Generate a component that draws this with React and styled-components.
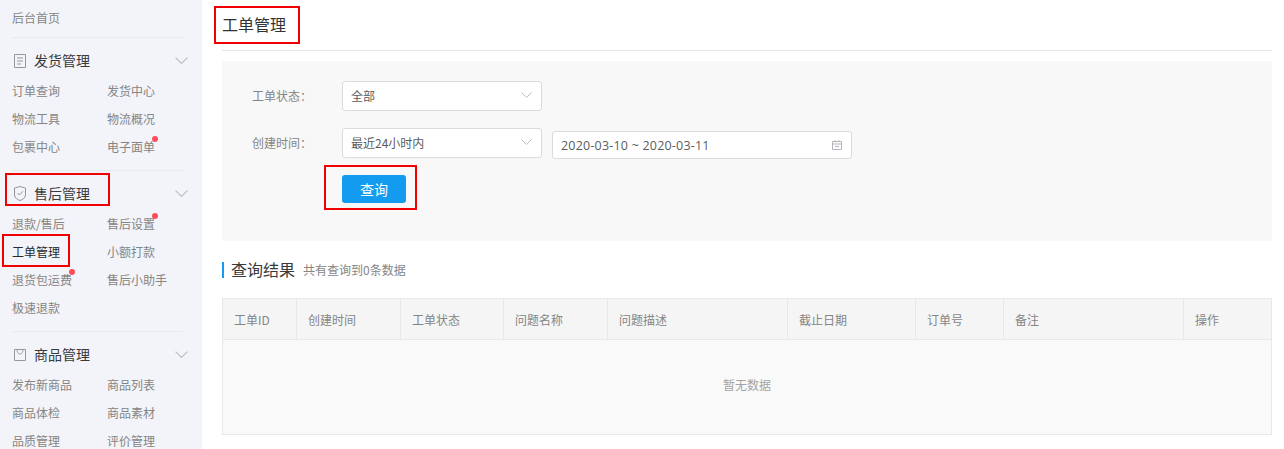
import React from 'react'
import styled, { createGlobalStyle } from 'styled-components'

const GlobalStyle = createGlobalStyle`
  html, body {
    margin: 0;
    padding: 0;
    background: #fff;
  }
  body {
    font-family: "Noto Sans CJK SC", "Open Sans", sans-serif;
    font-size: 12px;
    color: #666;
  }
  * { box-sizing: border-box; }
`

const Page = styled.div`
  position: relative;
  display: flex;
  width: 1284px;
  height: 449px;
  overflow: hidden;
`

const Sidebar = styled.aside`
  flex: none;
  width: 202px;
  height: 449px;
  padding: 0 19px 0 12px;
  background: #f3f4f9;
  overflow: hidden;
`

const HomeLink = styled.div`
  height: 38px;
  line-height: 36px;
  color: #858585;
  border-bottom: 1px solid #e9eaef;
`

const Section = styled.section`
  padding: 9px 0;
  border-bottom: 1px solid #e9eaef;
  &:last-child { border-bottom: 0; }
`

const SectionHead = styled.div`
  display: flex;
  align-items: center;
  height: 28px;
  margin-right: -5px;
  padding: 0 0 1px 2px;
  margin-bottom: 2px;
  font-size: 14px;
  color: #3a3a3a;
`

const SectionTitle = styled.span`
  flex: 1;
  margin: -1px 0 0 8px;
`

const LinkGrid = styled.div`
  display: grid;
  grid-template-columns: 95px 1fr;
  grid-auto-rows: 28px;
`

const NavLink = styled.a`
  position: relative;
  justify-self: start;
  line-height: 28px;
  color: ${p => (p.$active ? '#2a2a2a' : '#858585')};
`

const Dot = styled.i`
  position: absolute;
  top: 3px;
  right: -3px;
  width: 6px;
  height: 6px;
  border-radius: 50%;
  background: #ff4d5a;
`

const Main = styled.main`
  flex: 1;
  min-width: 0;
  margin-left: 20px;
  padding-right: 12px;
`

const Header = styled.header`
  height: 51px;
  line-height: 48px;
  font-size: 16px;
  color: #333;
  border-bottom: 1px solid #e6e6e6;
`

const FilterPanel = styled.div`
  height: 180px;
  margin-top: 10px;
  padding: 20px 30px;
  background: #f8f8f8;
`

const FormRow = styled.div`
  display: flex;
  align-items: flex-start;
  margin-bottom: 17px;
`

const Label = styled.label`
  flex: none;
  width: 90px;
  line-height: 30px;
  color: #858585;
`

const Select = styled.div`
  display: flex;
  align-items: center;
  justify-content: space-between;
  width: 200px;
  height: 30px;
  padding: 0 9px 2px 8px;
  color: #5c5c5c;
  background: #fff;
  border: 1px solid #dcdcdc;
  border-radius: 3px;
`

const DateInput = styled.div`
  display: flex;
  align-items: center;
  justify-content: space-between;
  width: 300px;
  height: 28px;
  margin: 3px 0 0 10px;
  padding: 0 9px 0 8px;
  font-family: "Open Sans", sans-serif;
  font-size: 12.5px;
  letter-spacing: 0.2px;
  color: #5c5c5c;
  background: #fff;
  border: 1px solid #dcdcdc;
  border-radius: 3px;
`

const QueryButton = styled.button`
  display: block;
  width: 64px;
  height: 28px;
  margin: -1px 0 0 90px;
  padding: 0;
  font: inherit;
  font-size: 14px;
  line-height: 26px;
  color: #fff;
  background: #129bef;
  border: 0;
  border-radius: 3px;
`

const ResultHead = styled.div`
  display: flex;
  align-items: center;
  height: 16px;
  margin-top: 21px;
  padding: 0 0 2px 7px;
  border-left: 2px solid #129bef;
`

const ResultTitle = styled.span`
  margin-right: 8px;
  font-size: 16px;
  color: #3a3a3a;
`

const ResultCount = styled.span`
  margin-top: 1px;
  color: #858585;
`

const Table = styled.div`
  margin-top: 20px;
  border: 1px solid #e8e8e8;
  background: #f9f9f9;
`

const TableHead = styled.div`
  display: grid;
  grid-template-columns: 73px 104px 103px 104px 180px 128px 88px 180px 1fr;
  height: 41px;
  background: #f5f5f5;
  border-bottom: 1px solid #e8e8e8;
`

const HeadCell = styled.div`
  padding-left: 11px;
  line-height: 41px;
  color: #858585;
  border-left: 1px solid #e8e8e8;
  &:first-child { border-left: 0; }
`

const Empty = styled.div`
  height: 94px;
  line-height: 90px;
  text-align: center;
  color: #a3a3a3;
`

const Mark = styled.div`
  position: absolute;
  left: ${p => p.$x}px;
  top: ${p => p.$y}px;
  width: ${p => p.$w}px;
  height: ${p => p.$h}px;
  border: 2px solid #f00000;
  pointer-events: none;
`

const Glyph = styled.svg`
  flex: none;
  display: block;
  fill: none;
  stroke: ${p => p.$stroke || '#969696'};
`

const Chevron = ({ width = 11, height = 6, stroke = '#bdbdbd' }) => (
  <Glyph $stroke={stroke} width={width} height={height} viewBox="0 0 11 6" preserveAspectRatio="none">
    <path d="M.5.5 5.500 5.500 10.500.5" />
  </Glyph>
)

const DocIcon = () => (
  <Glyph width="12" height="14" viewBox="0 0 12 14">
    <path d="M.5.5h11v13H.5zM3 4h6M3 7h6M3 10h4" />
  </Glyph>
)

const ShieldIcon = () => (
  <Glyph width="12" height="15" viewBox="0 0 12 15">
    <path d="M.5 2 6 .5 11.500 2v7C11.500 11.800 8.500 13.600 6 14.500 3.500 13.600.5 11.800.5 9z" />
    <path d="M3.500 7 5.500 9 8.800 5.300" />
  </Glyph>
)

const BagIcon = () => (
  <Glyph width="12" height="12" viewBox="0 0 12 12">
    <path d="M.5.5h11v11H.5zM3 .5C3.200 4 4.500 5 6 5s2.800-1 3-4.500" />
  </Glyph>
)

const CalendarIcon = () => (
  <Glyph $stroke="#b5b5bd" width="10" height="10" viewBox="0 0 10 10">
    <path d="M.5 1.500h9v8h-9zM.5 4h9M3 .2v2M7 .2v2M3 6.500h4" />
  </Glyph>
)

const menu = [
  {
    title: '发货管理',
    icon: <DocIcon />,
    links: [['订单查询'], ['发货中心'], ['物流工具'], ['物流概况'], ['包裹中心'], ['电子面单', 'dot']],
  },
  {
    title: '售后管理',
    icon: <ShieldIcon />,
    links: [['退款/售后'], ['售后设置', 'dot'], ['工单管理', 'active'], ['小额打款'], ['退货包运费', 'dot'], ['售后小助手'], ['极速退款']],
  },
  {
    title: '商品管理',
    icon: <BagIcon />,
    links: [['发布新商品'], ['商品列表'], ['商品体检'], ['商品素材'], ['品质管理'], ['评价管理']],
  },
]

const columns = ['工单ID', '创建时间', '工单状态', '问题名称', '问题描述', '截止日期', '订单号', '备注', '操作']

const App = () => {
  return (
    <Page>
      <GlobalStyle />
      <Sidebar>
        <HomeLink>后台首页</HomeLink>
        {menu.map(group => (
          <Section key={group.title}>
            <SectionHead>
              {group.icon}
              <SectionTitle>{group.title}</SectionTitle>
              <Chevron width={13} height={7} />
            </SectionHead>
            <LinkGrid>
              {group.links.map(([name, flag]) => (
                <NavLink key={name} $active={flag === 'active'}>
                  {name}
                  {flag === 'dot' && <Dot />}
                </NavLink>
              ))}
            </LinkGrid>
          </Section>
        ))}
      </Sidebar>

      <Main>
        <Header>工单管理</Header>
        <FilterPanel>
          <FormRow>
            <Label>工单状态：</Label>
            <Select>全部<Chevron /></Select>
          </FormRow>
          <FormRow>
            <Label>创建时间：</Label>
            <Select>最近24小时内<Chevron /></Select>
            <DateInput>2020-03-10 ~ 2020-03-11<CalendarIcon /></DateInput>
          </FormRow>
          <QueryButton>查询</QueryButton>
        </FilterPanel>

        <ResultHead>
          <ResultTitle>查询结果</ResultTitle>
          <ResultCount>共有查询到0条数据</ResultCount>
        </ResultHead>

        <Table>
          <TableHead>
            {columns.map(col => <HeadCell key={col}>{col}</HeadCell>)}
          </TableHead>
          <Empty>暂无数据</Empty>
        </Table>
      </Main>

      <Mark $x={214} $y={6} $w={86} $h={38} />
      <Mark $x={5} $y={173} $w={105} $h={33} />
      <Mark $x={2} $y={234} $w={68} $h={33} />
      <Mark $x={324} $y={165} $w={93} $h={45} />
    </Page>
  )
}

export default App
